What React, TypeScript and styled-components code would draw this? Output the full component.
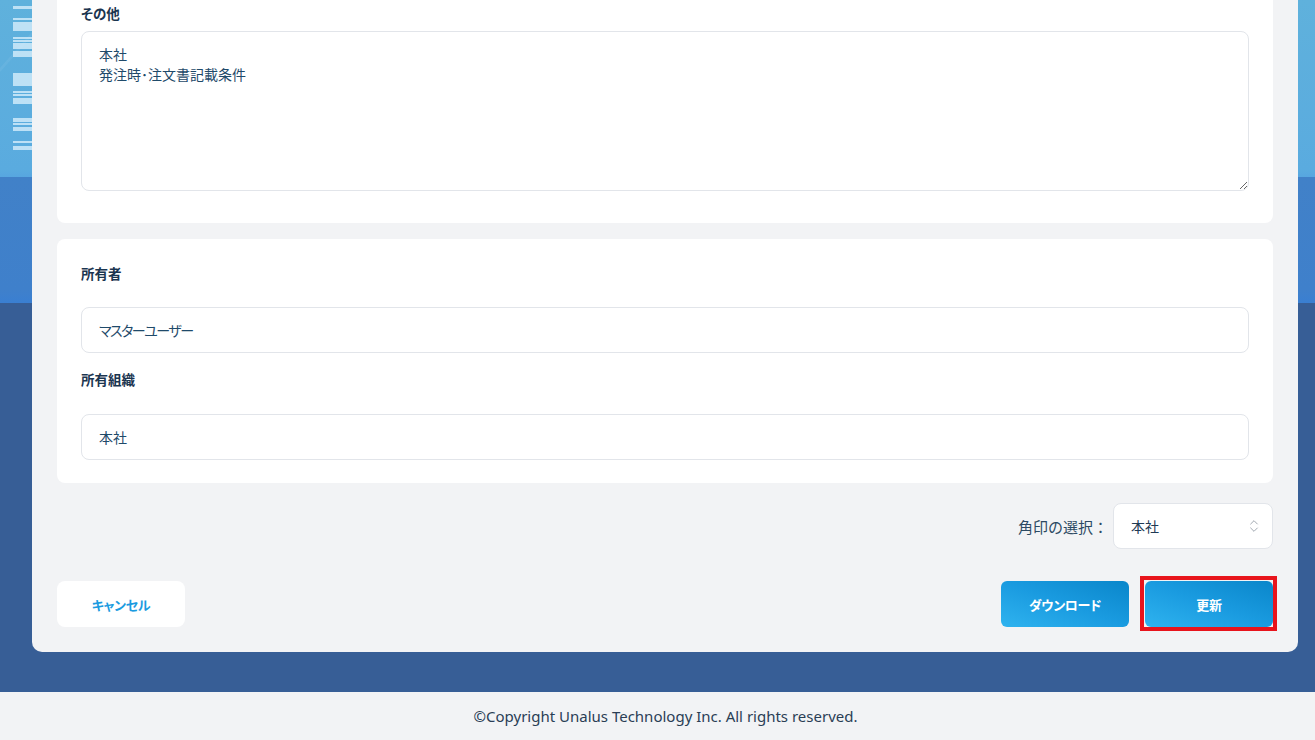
import React from "react";
import styled, { createGlobalStyle } from "styled-components";
import { ChevronsUpDown } from "lucide-react";

const GlobalStyle = createGlobalStyle`
  html, body {
    margin: 0;
    padding: 0;
  }
  body {
    font-family: "Noto Sans CJK JP", "Noto Sans", sans-serif;
    background: #f2f3f5;
  }
  * {
    box-sizing: border-box;
  }
`;

// 背景の装飾（左端のビル風イラスト）
const decoBars: [number, number][] = [
  [6, 3], [18, 2], [22, 9], [37, 2], [40, 2], [43, 6], [51, 6],
  [73, 13], [91, 2], [94, 2], [98, 6], [118, 4], [123, 2], [127, 4],
  [141, 2], [146, 4],
];

const App: React.FC = () => {
  return (
    <>
      <GlobalStyle />
      <Backdrop>
        <Gutter>
          <svg width="32" height="160" viewBox="0 0 32 160">
            <polygon points="0,68 32,32 32,36 0,72" fill="#ffffff" opacity="0.06" />
            {decoBars.map(([y, h]) => (
              <rect key={y} x={13} y={y} width={19} height={h} fill="#d6edfb" opacity={0.8} />
            ))}
          </svg>
        </Gutter>
        <Panel>
          {/* その他 */}
          <Card $clipped>
            <FieldLabel>その他</FieldLabel>
            <TextArea defaultValue={"本社\n発注時･注文書記載条件"} />
          </Card>

          {/* 所有者・所有組織 */}
          <Card>
            <FieldLabel>所有者</FieldLabel>
            <TextInput $narrow>マスターユーザー</TextInput>
            <FieldLabel>所有組織</FieldLabel>
            <TextInput>本社</TextInput>
          </Card>

          {/* 角印の選択 */}
          <StampRow>
            <StampLabel>角印の選択：</StampLabel>
            <SelectBox>
              <span>本社</span>
              <ChevronsUpDown size={16} strokeWidth={1.4} color="#9aa1ab" />
            </SelectBox>
          </StampRow>

          <ActionRow>
            <CancelButton>キャンセル</CancelButton>
            <ButtonGroup>
              <PrimaryButton>ダウンロード</PrimaryButton>
              <HighlightFrame>
                <PrimaryButton>更新</PrimaryButton>
              </HighlightFrame>
            </ButtonGroup>
          </ActionRow>
        </Panel>
        <Gutter $right />
      </Backdrop>
      <Footer>©Copyright Unalus Technology Inc. All rights reserved.</Footer>
    </>
  );
};
export default App;

const Backdrop = styled.div`
  display: flex;
  align-items: flex-start;
  height: 692px;
  background: linear-gradient(
    to bottom,
    #5fb1dc 0px,
    #5aabdf 170px,
    #57a6e0 177px,
    #4181c8 177px,
    #3f80cb 290px,
    #3a7fd2 303px,
    #375e96 303px,
    #375e96 100%
  );
`;

const Gutter = styled.div<{ $right?: boolean }>`
  flex: 0 0 ${(p) => (p.$right ? "17px" : "32px")};
  overflow: hidden;
  svg {
    display: block;
  }
`;

const Panel = styled.div`
  flex: 1;
  display: flex;
  flex-direction: column;
  padding: 0 25px 25px;
  background: #f2f3f5;
  border-radius: 0 0 10px 10px;
`;

const Card = styled.section<{ $clipped?: boolean }>`
  display: flex;
  flex-direction: column;
  background: #fff;
  border-radius: ${(p) => (p.$clipped ? "0 0 8px 8px" : "8px")};
  padding: ${(p) => (p.$clipped ? "3px 24px 32px" : "24px 24px 23px")};
  & + & {
    margin-top: 16px;
  }
`;

const FieldLabel = styled.label`
  display: block;
  font-size: 13.5px;
  line-height: 20px;
  font-weight: 700;
  color: #1b3550;
  font-feature-settings: "palt";
  margin-bottom: 8px;

  &:first-child:not(:only-of-type) {
    margin-bottom: 24px;
  }
  & ~ & {
    margin-top: 16px;
    margin-bottom: 25px;
  }
`;

const TextArea = styled.textarea`
  display: block;
  width: 100%;
  height: 160px;
  padding: 12px 17px;
  border: 1px solid #e2e5ea;
  border-radius: 8px;
  font-family: "Noto Sans CJK JP", "Noto Sans", sans-serif;
  font-size: 14px;
  line-height: 20px;
  color: #1f4a6a;
  font-feature-settings: "palt";
  resize: vertical;
  outline: none;
`;

const TextInput = styled.div<{ $narrow?: boolean }>`
  display: flex;
  align-items: center;
  height: 46px;
  padding: 0 17px;
  border: 1px solid #e2e5ea;
  border-radius: 8px;
  font-size: 14px;
  color: #1f4a6a;
  font-feature-settings: "palt";
  letter-spacing: ${(p) => (p.$narrow ? "-1.5px" : "0")};
`;

const StampRow = styled.div`
  display: flex;
  justify-content: flex-end;
  align-items: center;
  gap: 5px;
  margin-top: 20px;
`;

const StampLabel = styled.span`
  font-size: 15px;
  color: #2d4a63;
`;

const SelectBox = styled.div`
  display: flex;
  align-items: center;
  justify-content: space-between;
  width: 160px;
  height: 46px;
  padding: 0 10px 0 17px;
  background: #fff;
  border: 1px solid #e2e5ea;
  border-radius: 8px;
  font-size: 14px;
  color: #1f3a55;
`;

const ActionRow = styled.div`
  display: flex;
  justify-content: space-between;
  align-items: center;
  margin-top: 32px;
`;

const ButtonGroup = styled.div`
  display: flex;
  gap: 16px;
`;

const BaseButton = styled.button`
  width: 128px;
  height: 46px;
  border: none;
  font-family: "Noto Sans CJK JP", "Noto Sans", sans-serif;
  font-size: 13px;
  font-weight: 700;
  font-feature-settings: "palt";
  letter-spacing: -0.3px;
  cursor: pointer;
`;

const CancelButton = styled(BaseButton)`
  background: #fff;
  color: #1b9be0;
  border-radius: 8px;
`;

const PrimaryButton = styled(BaseButton)`
  display: block;
  color: #fff;
  border-radius: 6px;
  background: linear-gradient(to top right, #2fb3ef 0%, #1a9be0 50%, #0a86ca 100%);
`;

// 操作箇所を示す赤枠（レイアウトには影響させない）
const HighlightFrame = styled.span`
  display: block;
  margin: -5px -4px -4px -5px;
  padding: 1px 0 0 1px;
  border: 4px solid #e8141c;
`;

const Footer = styled.footer`
  display: flex;
  align-items: center;
  justify-content: center;
  height: 48px;
  padding-left: 16px;
  background: #f2f3f5;
  font-family: "Noto Sans", "Open Sans", sans-serif;
  font-size: 15px;
  color: #2a3e55;
`;
